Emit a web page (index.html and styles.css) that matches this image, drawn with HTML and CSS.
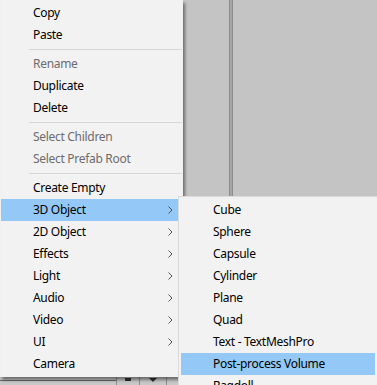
FILE: index.html
```html
<!DOCTYPE html>
<html>
<head>
<meta charset="utf-8">
<link rel="stylesheet" href="styles.css">
</head>
<body>
<div class="editor">
  <div class="workspace">
    <div class="divider"></div>
  </div>
  <div class="toolbar">
    <div class="track"></div>
    <div class="tool-sep"></div>
    <div class="tool tool-bar"><span class="bar-glyph"></span></div>
    <div class="tool-sep"></div>
    <div class="tool tool-drop"><span class="tri"></span></div>
    <div class="tool-sep"></div>
    <div class="tool tool-end"></div>
  </div>

  <div class="menu main-menu">
    <div class="item">Copy</div>
    <div class="item">Paste</div>
    <div class="sep"></div>
    <div class="item disabled">Rename</div>
    <div class="item">Duplicate</div>
    <div class="item">Delete</div>
    <div class="sep"></div>
    <div class="item disabled">Select Children</div>
    <div class="item disabled">Select Prefab Root</div>
    <div class="sep"></div>
    <div class="item">Create Empty</div>
    <div class="item active has-sub">3D Object<svg class="chev" width="5" height="8" viewBox="0 0 5 8"><polyline points="0.5,0.5 4,4 0.5,7.5" fill="none" stroke="#444" stroke-width="0.9"/></svg></div>
    <div class="item has-sub">2D Object<svg class="chev" width="5" height="8" viewBox="0 0 5 8"><polyline points="0.5,0.5 4,4 0.5,7.5" fill="none" stroke="#444" stroke-width="0.9"/></svg></div>
    <div class="item has-sub">Effects<svg class="chev" width="5" height="8" viewBox="0 0 5 8"><polyline points="0.5,0.5 4,4 0.5,7.5" fill="none" stroke="#444" stroke-width="0.9"/></svg></div>
    <div class="item has-sub">Light<svg class="chev" width="5" height="8" viewBox="0 0 5 8"><polyline points="0.5,0.5 4,4 0.5,7.5" fill="none" stroke="#444" stroke-width="0.9"/></svg></div>
    <div class="item has-sub">Audio<svg class="chev" width="5" height="8" viewBox="0 0 5 8"><polyline points="0.5,0.5 4,4 0.5,7.5" fill="none" stroke="#444" stroke-width="0.9"/></svg></div>
    <div class="item has-sub">Video<svg class="chev" width="5" height="8" viewBox="0 0 5 8"><polyline points="0.5,0.5 4,4 0.5,7.5" fill="none" stroke="#444" stroke-width="0.9"/></svg></div>
    <div class="item has-sub">UI<svg class="chev" width="5" height="8" viewBox="0 0 5 8"><polyline points="0.5,0.5 4,4 0.5,7.5" fill="none" stroke="#444" stroke-width="0.9"/></svg></div>
    <div class="item">Camera</div>
  </div>

  <div class="menu sub-menu">
    <div class="item">Cube</div>
    <div class="item">Sphere</div>
    <div class="item">Capsule</div>
    <div class="item">Cylinder</div>
    <div class="item">Plane</div>
    <div class="item">Quad</div>
    <div class="item">Text - TextMeshPro</div>
    <div class="item active">Post-process Volume</div>
    <div class="item">Ragdoll...</div>
  </div>
</div>
</body>
</html>
```

FILE: styles.css
```css
html, body {
  margin: 0;
  padding: 0;
  width: 377px;
  height: 385px;
  overflow: hidden;
}

.editor {
  position: relative;
  width: 377px;
  height: 385px;
  overflow: hidden;
  display: flex;
  flex-direction: column;
  background: #c4c4c4;
  font-family: "Noto Sans", "Segoe UI", sans-serif;
  font-size: 12px;
  letter-spacing: -0.3px;
  color: #000;
}

.workspace {
  flex: 1;
  display: flex;
}

.divider {
  margin-left: 229px;
  width: 2px;
  border-left: 1px solid #8c8c8c;
  border-right: 1px solid #8c8c8c;
  background: #a6a6a6;
}

.toolbar {
  height: 8px;
  display: flex;
  background: #c8c8c8;
  border-top: 1px solid #e6e6e6;
}

.track {
  width: 116px;
  margin-top: 3px;
  height: 1px;
  background: #6a6a6a;
}

.tool-sep {
  width: 1px;
  background: #8f8f8f;
}

.tool {
  height: 100%;
  display: flex;
  justify-content: center;
}

.tool-bar { width: 22px; }
.bar-glyph {
  margin-top: 1px;
  width: 6px;
  height: 3px;
  background: #333;
}

.tool-drop { width: 26px; }
.tri {
  margin-top: 1px;
  width: 0;
  height: 0;
  border-left: 4px solid transparent;
  border-right: 4px solid transparent;
  border-top: 4px solid #333;
}

.tool-end { width: 20px; }

.menu {
  position: absolute;
  background: #f2f2f2;
  box-sizing: border-box;
}

.main-menu {
  left: 0;
  top: 0;
  width: 183px;
  height: 377px;
  padding-top: 2px;
  border-left: 1px solid #f0f0f0;
  box-shadow: 2px 3px 3px rgba(0, 0, 0, 0.45);
}

.sub-menu {
  left: 178px;
  top: 196px;
  width: 200px;
  height: 189px;
  overflow: hidden;
  padding: 2px 2px 0;
  border: 1px solid #dadada;
  border-bottom: none;
}

.item {
  height: 22px;
  line-height: 22px;
  padding-left: 32px;
  display: flex;
  align-items: center;
  white-space: nowrap;
}

.main-menu .item {
  padding-right: 10px;
}

.item.disabled {
  color: #6d6d6d;
}

.item.active {
  background: #94c9f7;
}

.chev {
  margin-left: auto;
  display: block;
}

.sep {
  height: 7px;
  display: flex;
  align-items: center;
  margin-left: 28px;
  margin-right: 1px;
}

.sep::before {
  content: "";
  flex: 1;
  height: 1px;
  background: #d7d7d7;
}
```
